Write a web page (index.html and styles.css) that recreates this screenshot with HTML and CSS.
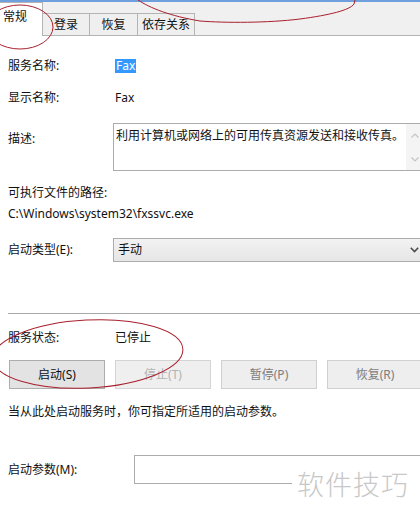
FILE: index.html
```html
<!DOCTYPE html>
<html lang="zh-CN">
<head>
<meta charset="utf-8">
<title>Fax 属性</title>
<link rel="stylesheet" href="styles.css">
</head>
<body>
<div class="window">
  <div class="topline"></div>
  <div class="tabbar">
    <div class="tab active">常规</div>
    <div class="tab t2">登录</div>
    <div class="tab t3">恢复</div>
    <div class="tab t4">依存关系</div>
  </div>
  <div class="panel">
    <div class="row row-name">
      <span class="label">服务名称:</span>
      <span class="value"><span class="selected">Fax</span></span>
    </div>
    <div class="row row-display">
      <span class="label">显示名称:</span>
      <span class="value">Fax</span>
    </div>
    <div class="row row-desc">
      <span class="label">描述:</span>
      <div class="textbox">
        <div class="textbox-text">利用计算机或网络上的可用传真资源发送和接收传真。</div>
        <div class="scroll">
          <svg class="arrow" width="8" height="5" viewBox="0 0 8 5"><path d="M0.5 4.5 L4 1 L7.5 4.5" fill="none" stroke="#c4c4c4" stroke-width="1.2"/></svg>
          <svg class="arrow" width="8" height="5" viewBox="0 0 8 5"><path d="M0.5 0.5 L4 4 L7.5 0.5" fill="none" stroke="#c4c4c4" stroke-width="1.2"/></svg>
        </div>
      </div>
    </div>
    <div class="path-label">可执行文件的路径:</div>
    <div class="path-value">C:\Windows\system32\fxssvc.exe</div>
    <div class="row row-type">
      <span class="label">启动类型(E):</span>
      <div class="select">
        <span>手动</span>
        <svg class="chev" width="9" height="6" viewBox="0 0 9 6"><path d="M0.8 0.8 L4.5 4.5 L8.2 0.8" fill="none" stroke="#4a4a4a" stroke-width="1.6"/></svg>
      </div>
    </div>
    <div class="separator"></div>
    <div class="row row-status">
      <span class="label">服务状态:</span>
      <span class="value">已停止</span>
    </div>
    <div class="buttons">
      <div class="btn">启动(S)</div>
      <div class="btn off">停止(T)</div>
      <div class="btn dim">暂停(P)</div>
      <div class="btn dim">恢复(R)</div>
    </div>
    <div class="hint">当从此处启动服务时，你可指定所适用的启动参数。</div>
    <div class="row row-params">
      <span class="label label-wide">启动参数(M):</span>
      <div class="input"></div>
    </div>
  </div>
  <div class="watermark">软件技巧</div>
  <svg class="marks" width="420" height="520" viewBox="0 0 420 520">
    <ellipse cx="20" cy="27" rx="33" ry="22" fill="none" stroke="#a8202e" stroke-width="1"/>
    <path d="M138 0 C150 8 170 16 200 21 C225 23 268 23 300 19 C330 15 350 10 354 4 L355 0" fill="none" stroke="#a8202e" stroke-width="1"/>
    <ellipse cx="88" cy="354" rx="95" ry="34" transform="rotate(-3 88 354)" fill="none" stroke="#a8202e" stroke-width="1"/>
  </svg>
</div>
</body>
</html>
```

FILE: styles.css
```css
* { box-sizing: border-box; }
html, body {
  margin: 0;
  padding: 0;
  width: 420px;
  height: 520px;
  overflow: hidden;
  background: #fff;
}
body {
  font-family: "Noto Sans", "Noto Sans CJK SC", sans-serif;
  font-size: 12px;
  line-height: 16px;
  color: #111;
}
.window {
  position: relative;
  width: 420px;
  height: 520px;
}
.topline {
  height: 2px;
  background: #6f9fdd;
}
.tabbar {
  height: 34px;
  background: #f0f0f0;
  border-bottom: 1px solid #b4b4b4;
  display: flex;
  align-items: flex-end;
}
.tab {
  height: 23px;
  margin-bottom: -1px;
  margin-left: -1px;
  border: 1px solid #b4b4b4;
  background: #efefef;
  display: flex;
  align-items: center;
  justify-content: center;
  padding-top: 1px;
}
.tab.active {
  height: 34px;
  width: 44px;
  margin-left: -1px;
  background: #fff;
  border-bottom: none;
  justify-content: flex-start;
  padding-left: 3px;
  padding-top: 0;
  padding-bottom: 6px;
  position: relative;
  z-index: 1;
}
.tab.t2 { width: 48px; }
.tab.t3 { width: 49px; }
.tab.t4 { width: 58px; }

.panel {
  padding-left: 8px;
}
.row {
  display: flex;
  align-items: center;
}
.label {
  width: 105px;
  flex: none;
}
.label-wide { width: 126px; }
.value { padding-left: 2px; }
.row-name { height: 24px; margin-top: 18px; }
.selected {
  display: inline-block;
  background: #3399ff;
  color: #fff;
  padding: 0 1px;
  line-height: 14px;
}
.row-display { height: 24px; margin-top: 8px; }
.row-desc {
  margin-top: 13px;
  align-items: flex-start;
}
.row-desc .label { padding-top: 8px; }
.textbox {
  width: 307px;
  height: 48px;
  border: 1px solid #acacac;
  border-right: none;
  display: flex;
}
.textbox-text {
  flex: 1;
  padding: 4px 0 0 2px;
  white-space: nowrap;
}
.scroll {
  width: 14px;
  background: #f4f4f4;
  display: flex;
  flex-direction: column;
  justify-content: space-between;
  align-items: flex-start;
  padding: 9px 0 8px 5px;
}
.arrow { display: block; }
.path-label { margin-top: 14px; }
.path-value { margin-top: 5px; }
.row-type { margin-top: 16px; height: 24px; }
.select {
  width: 307px;
  height: 24px;
  border: 1px solid #acacac;
  border-right: none;
  background: linear-gradient(#f2f2f2, #e6e6e6);
  display: flex;
  align-items: center;
  justify-content: space-between;
  padding-left: 4px;
  padding-right: 1px;
}
.chev { display: block; }
.separator {
  margin-top: 51px;
  height: 1px;
  background: #a8a8a8;
}
.row-status { margin-top: 16px; height: 16px; }
.buttons {
  margin-top: 14px;
  display: flex;
  gap: 10px;
  padding-left: 1px;
}
.btn {
  flex: none;
  width: 96px;
  height: 29px;
  border: 1px solid #adadad;
  background: #e3e3e3;
  display: flex;
  align-items: center;
  justify-content: center;
}
.btn.off {
  border-color: #d4d4d4;
  background: #efefef;
  color: #b3b3b3;
}
.btn.dim {
  border-color: #d0d0d0;
  background: #eeeeee;
  color: #7d7d7d;
}
.hint { margin-top: 15px; }
.row-params { margin-top: 35px; height: 29px; }
.input {
  width: 290px;
  height: 29px;
  border: 1px solid #acacac;
  border-right: none;
}
.watermark {
  position: absolute;
  left: 292px;
  right: 0;
  top: 469px;
  padding: 0 0 0 5px;
  background: #fff;
  font-family: "Noto Sans CJK SC", sans-serif;
  font-weight: 300;
  font-size: 27px;
  line-height: 30px;
  letter-spacing: 1px;
  color: #c8c8c8;
}
.marks {
  position: absolute;
  left: 0;
  top: 0;
  pointer-events: none;
  z-index: 5;
}
```
